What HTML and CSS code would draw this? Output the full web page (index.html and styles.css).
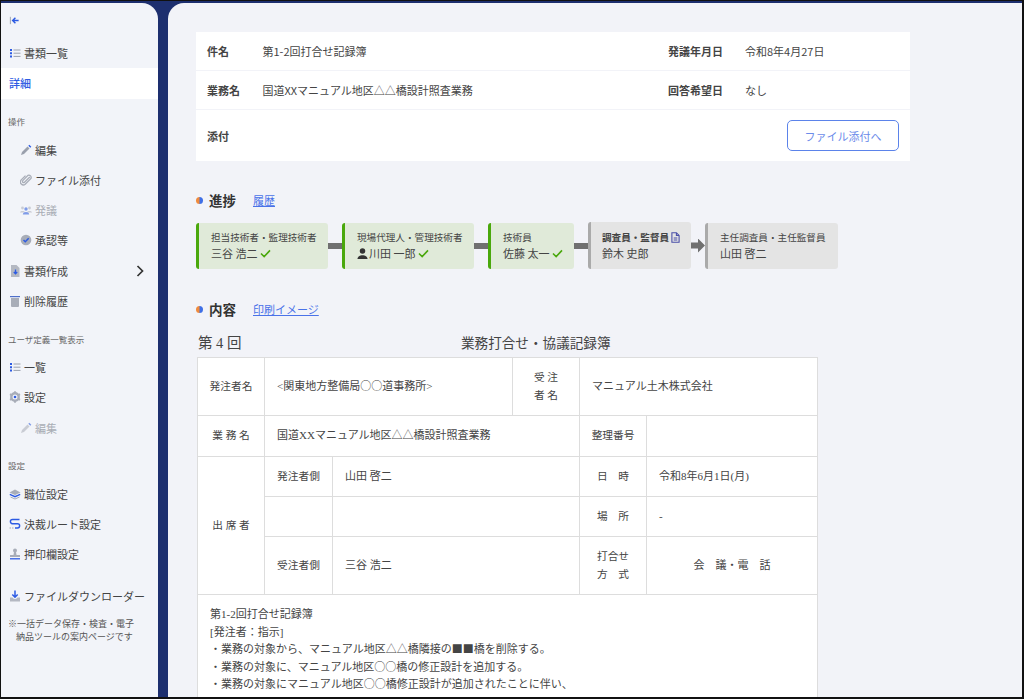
FILE: index.html
```html
<!DOCTYPE html>
<html lang="ja">
  <head>
    <meta charset="UTF-8" />
    <title>書類詳細</title>
    <link rel="stylesheet" href="styles.css">
  </head>
  <body>
    <div class="app">
      <aside class="sidebar">
        <div class="back-row">
          <svg class="icon" viewBox="0 0 12 12"><path d="M1.500 2v8" stroke="#9aa0ad" fill="none"/><path d="M10.500 6H4.500M7 3 4 6l3 3" stroke="#2d5be3" stroke-width="1.600" fill="none"/></svg>
        </div>

        <a class="nav-row">
          <svg class="icon" viewBox="0 0 12 12"><path d="M1 2h2v2H1zM1 5.200h2v2H1zM1 8.400h2v2H1z" fill="#2d5be3"/><path d="M4.500 3h7M4.500 6.200h7M4.500 9.400h7" stroke="#9aa0ad" fill="none"/></svg>
          書類一覧
        </a>
        <a class="nav-row active">詳細</a>

        <div class="nav-label">操作</div>
        <a class="nav-row sub">
          <svg class="icon" viewBox="0 0 12 12"><path d="M1 11l1-3 5.500-5.500 2 2L4 10z" fill="#9aa0ad"/><path d="M8.300 1.800 9.300.8l2 2-1 1z" fill="#2d5be3"/></svg>
          編集
        </a>
        <a class="nav-row sub">
          <svg class="icon" viewBox="0 0 12 12"><path d="M9.800 3 4.500 8.300a1.200 1.200 0 0 1-1.700-1.700L8 1.400a2.300 2.300 0 0 1 3 3L5.200 10.300a3 3 0 0 1-4.200-4.200L5.500 1.600" stroke="#a8adb8" stroke-width="1.300" fill="none"/></svg>
          ファイル添付
        </a>
        <a class="nav-row sub disabled">
          <svg class="icon" viewBox="0 0 12 12"><circle cx="2.500" cy="4" r="1.400" fill="#c9ccd4"/><circle cx="9.500" cy="4" r="1.400" fill="#c9ccd4"/><path d="M0 8.500c0-2 5-2 5 0zM7 8.500c0-2 5-2 5 0z" fill="#c9ccd4"/><circle cx="6" cy="5" r="1.700" fill="#7f9be8"/><path d="M2.800 10.500c0-3.300 6.400-3.300 6.400 0z" fill="#7f9be8"/></svg>
          発議
        </a>
        <a class="nav-row sub">
          <svg class="icon" viewBox="0 0 12 12"><circle cx="6" cy="6" r="5.300" fill="#a8adb8"/><path d="M3.500 6 5.300 7.800 8.700 4.300" stroke="#2d5be3" stroke-width="1.500" fill="none"/></svg>
          承認等
        </a>
        <a class="nav-row">
          <svg class="icon" viewBox="0 0 12 12"><path d="M2 0h5.500L10.500 3v9H2z" fill="#b4b8c2"/><path d="M6.500 4.500v4M4.800 7l1.700 1.800L8.200 7" stroke="#2d5be3" stroke-width="1.300" fill="none"/></svg>
          書類作成
          <svg class="chevron" viewBox="0 0 8 12"><path d="M1.500 1 6.500 6l-5 5" stroke="#333" stroke-width="1.700" fill="none"/></svg>
        </a>
        <a class="nav-row">
          <svg class="icon" viewBox="0 0 12 12"><path d="M1 1h10v1.200H1z" fill="#4f6fc9"/><path d="M2 3h8v8a1 1 0 0 1-1 1H3a1 1 0 0 1-1-1z" fill="#a8adb8"/></svg>
          削除履歴
        </a>

        <div class="nav-label">ユーザ定義一覧表示</div>
        <a class="nav-row">
          <svg class="icon" viewBox="0 0 12 12"><path d="M1 2h2v2H1zM1 5.200h2v2H1zM1 8.400h2v2H1z" fill="#2d5be3"/><path d="M4.500 3h7M4.500 6.200h7M4.500 9.400h7" stroke="#9aa0ad" fill="none"/></svg>
          一覧
        </a>
        <a class="nav-row">
          <svg class="icon" viewBox="0 0 12 12"><circle cx="6" cy="6" r="3.700" fill="none" stroke="#a8adb8" stroke-width="2.400"/><path d="M6 .3v2M6 9.700v2M1 3.100l1.700 1M9.300 7.900l1.700 1M1 8.900l1.700-1M9.300 4.100l1.700-1" stroke="#a8adb8" stroke-width="1.800"/><circle cx="6" cy="6" r="1.300" fill="#2d5be3"/></svg>
          設定
        </a>
        <a class="nav-row sub disabled">
          <svg class="icon" viewBox="0 0 12 12"><path d="M1 11l1-3 5.500-5.500 2 2L4 10z" fill="#c9ccd4"/><path d="M8.300 1.800 9.300.8l2 2-1 1z" fill="#7f9be8"/></svg>
          編集
        </a>

        <div class="nav-label">設定</div>
        <a class="nav-row">
          <svg class="icon" viewBox="0 0 12 12"><path d="M6 1.500 11.500 4.500 6 7 .5 4.500z" fill="#a8adb8"/><path d="M.8 6.300 6 8.700l5.200-2.400" stroke="#2d5be3" stroke-width="1.300" fill="none"/><path d="M1.500 9 6 11l4.500-2" stroke="#a8adb8" fill="none"/></svg>
          職位設定
        </a>
        <a class="nav-row">
          <svg class="icon" viewBox="0 0 12 12"><path d="M10.500 1.500H3.500a2 2 0 0 0 0 4.200h5a2 2 0 0 1 0 4.300H6" stroke="#2d5be3" stroke-width="1.400" fill="none"/><path d="M.5 10h1.500M3 10h1.500" stroke="#a8adb8" stroke-width="1.200"/></svg>
          決裁ルート設定
        </a>
        <a class="nav-row">
          <svg class="icon" viewBox="0 0 12 12"><circle cx="6" cy="2.500" r="2" fill="#a8adb8"/><path d="M5 4h2l.5 3H11v2H1V7h3.500z" fill="#a8adb8"/><path d="M1 10.800h10" stroke="#2d5be3" stroke-width="1.300"/></svg>
          押印欄設定
        </a>
        <a class="nav-row download">
          <svg class="icon" viewBox="0 0 12 12"><path d="M6 .5v6.500M3.300 4.500 6 7.200l2.700-2.700" stroke="#2d5be3" stroke-width="1.500" fill="none"/><path d="M1 7.500h2.500L5 9h2l1.500-1.500H11V11.500H1z" fill="#b4b8c2"/></svg>
          ファイルダウンローダー
        </a>
        <p class="nav-note">※一括データ保存・検査・電子<span class="nav-note-rest">納品ツールの案内ページです</span></p>
      </aside>

      <main class="main">
        <section class="info-card">
          <div class="info-row">
            <span class="info-label">件名</span>
            <span>第1-2回打合せ記録簿</span>
            <span class="info-label">発議年月日</span>
            <span>令和8年4月27日</span>
          </div>
          <div class="info-row">
            <span class="info-label">業務名</span>
            <span>国道XXマニュアル地区△△橋設計照査業務</span>
            <span class="info-label">回答希望日</span>
            <span>なし</span>
          </div>
          <div class="info-row attach-row">
            <span class="info-label">添付</span>
            <button class="attach-btn">ファイル添付へ</button>
          </div>
        </section>

        <div class="section-head progress-head">
          <span class="dot"></span>
          <h2>進捗</h2>
          <a class="head-link">履歴</a>
        </div>

        <div class="flow">
          <div class="step done step-first">
            <div class="step-role">担当技術者・監理技術者</div>
            <div class="step-name">三谷 浩二<svg class="check" viewBox="0 0 12 10"><path d="M1 5l3.500 3.500L11 1.500" stroke="#4aa80c" stroke-width="1.800" fill="none"/></svg></div>
          </div>
          <div class="link"></div>
          <div class="step done step-second">
            <div class="step-role">現場代理人・管理技術者</div>
            <div class="step-name"><svg class="person" viewBox="0 0 12 12"><circle cx="6" cy="3.200" r="3" fill="#333"/><path d="M.5 12c0-5.500 11-5.500 11 0z" fill="#333"/></svg>川田 一郎<svg class="check" viewBox="0 0 12 10"><path d="M1 5l3.500 3.500L11 1.500" stroke="#4aa80c" stroke-width="1.800" fill="none"/></svg></div>
          </div>
          <div class="link"></div>
          <div class="step done step-third">
            <div class="step-role">技術員</div>
            <div class="step-name">佐藤 太一<svg class="check" viewBox="0 0 12 10"><path d="M1 5l3.500 3.500L11 1.500" stroke="#4aa80c" stroke-width="1.800" fill="none"/></svg></div>
          </div>
          <div class="link"></div>
          <div class="step current">
            <div class="step-role"><b>調査員・監督員</b><svg class="doc" viewBox="0 0 10 12"><path d="M1 .7h5L9 3.700v7.600H1zM6 .7v3h3M3 6.500h4M3 8.700h4" stroke="#4a4fa8" stroke-width="1.200" fill="none"/></svg></div>
            <div class="step-name">鈴木 史郎</div>
          </div>
          <div class="link arrow"></div>
          <div class="step waiting">
            <div class="step-role">主任調査員・主任監督員</div>
            <div class="step-name">山田 啓二</div>
          </div>
        </div>

        <div class="section-head">
          <span class="dot"></span>
          <h2>内容</h2>
          <a class="head-link">印刷イメージ</a>
        </div>

        <div class="doc-head">
          <span class="doc-no">第 4 回</span>
          <span class="doc-title">業務打合せ・協議記録簿</span>
        </div>

        <table class="record">
          <colgroup>
            <col class="c-a" /><col class="c-b" /><col class="c-c" /><col class="c-d" /><col class="c-e" /><col class="c-f" />
          </colgroup>
          <tr class="tall">
            <th>発注者名</th>
            <td colspan="2">&lt;関東地方整備局<span class="sym">○○</span>道事務所&gt;</td>
            <th>受 注<br />者 名</th>
            <td colspan="2">マニュアル土木株式会社</td>
          </tr>
          <tr class="mid">
            <th>業 務 名</th>
            <td colspan="3">国道XXマニュアル地区<span class="sym">△△</span>橋設計照査業務</td>
            <th>整理番号</th>
            <td></td>
          </tr>
          <tr class="std">
            <th rowspan="3">出 席 者</th>
            <th>発注者側</th>
            <td colspan="2">山田 啓二</td>
            <th>日　時</th>
            <td>令和8年6月1日(月)</td>
          </tr>
          <tr class="std">
            <th></th>
            <td colspan="2"></td>
            <th>場　所</th>
            <td>-</td>
          </tr>
          <tr class="tall">
            <th>受注者側</th>
            <td colspan="2">三谷 浩二</td>
            <th>打合せ<br />方　式</th>
            <td class="method">会　議・電　話</td>
          </tr>
          <tr>
            <td class="minutes" colspan="6">
              第1-2回打合せ記録簿<br />
              [発注者：指示]<br />
              ・業務の対象から、マニュアル地区<span class="sym">△△</span>橋隣接の<span class="sym">■■</span>橋を削除する。<br />
              ・業務の対象に、マニュアル地区<span class="sym">○○</span>橋の修正設計を追加する。<br />
              ・業務の対象にマニュアル地区<span class="sym">○○</span>橋修正設計が追加されたことに伴い、
            </td>
          </tr>
        </table>
      </main>
    </div>
  </body>
</html>
```

FILE: styles.css
```css
* {
  box-sizing: border-box;
}

body {
  margin: 0;
  height: 699px;
  overflow: hidden;
  font-family: "Noto Sans CJK JP", "Noto Sans", sans-serif;
  font-size: 11px;
  color: #444;
  background-color: #1d2f6f;
}

.app {
  display: flex;
  height: 699px;
  padding-top: 2px;
  justify-content: space-between;
  border-style: solid;
  border-color: #111;
  border-width: 1px 2px 2px 1px;
}

/* sidebar */
.sidebar {
  width: 157px;
  flex-shrink: 0;
  background-color: #f2f4f9;
  border-top-right-radius: 16px;
}

.back-row {
  height: 35px;
  padding-left: 8px;
  display: flex;
  align-items: center;
}

.back-row .icon {
  width: 11px;
  height: 11px;
}

.nav-row {
  height: 30.25px;
  padding-left: 8px;
  display: flex;
  align-items: center;
  gap: 3px;
  color: #444;
}

.nav-row.sub {
  padding-left: 19px;
}

.nav-row.active {
  background-color: #fff;
  color: #2d5be3;
  font-weight: 500;
}

.nav-row.disabled {
  color: #a9adb5;
}

.nav-row.download {
  margin-top: 11px;
}

.icon {
  width: 12px;
  height: 12px;
  flex-shrink: 0;
}

.chevron {
  width: 8px;
  height: 12px;
  margin-left: auto;
  margin-right: 14px;
}

.nav-label {
  padding: 15.5px 0 5.5px 7px;
  font-size: 8.5px;
  line-height: 15px;
  color: #666;
}

.nav-note {
  margin: 6px 0 0 7px;
  font-size: 9px;
  line-height: 13px;
  color: #555;
}

.nav-note-rest {
  display: block;
  padding-left: 8px;
}

/* main area */
.main {
  width: 854px;
  flex-shrink: 0;
  padding: 29px 0 0 28px;
  overflow: hidden;
  background-color: #f2f3f8;
  border-top-left-radius: 16px;
}

.info-card {
  width: 714px;
  background-color: #fff;
}

.info-row {
  height: 39px;
  padding: 0 11px;
  display: grid;
  grid-template-columns: 55.5px 405.5px 77px 1fr;
  align-items: center;
  border-bottom: 1px solid #f2f3f8;
}

.info-label {
  font-weight: 700;
  color: #444;
}

.attach-row {
  height: 51px;
  display: flex;
  justify-content: space-between;
  border-bottom: none;
}

.attach-btn {
  width: 112px;
  height: 31px;
  padding: 0;
  font-family: inherit;
  font-size: 11px;
  color: #6b8bea;
  background-color: #fff;
  border: 1px solid #5b83ea;
  border-radius: 5px;
}

.section-head {
  height: 20px;
  margin-top: 30px;
  display: flex;
  align-items: center;
}

.progress-head {
  margin-top: 29px;
}

.dot {
  width: 7px;
  height: 7px;
  border-radius: 50%;
  background: linear-gradient(90deg, #f08a3c 40%, #3f6fe6 60%);
}

.section-head h2 {
  margin: 0 0 0 6px;
  font-size: 13.5px;
  font-weight: 700;
  color: #333;
}

.head-link {
  margin-left: 17px;
  color: #4a72e8;
  text-decoration: underline;
}

/* approval flow */
.flow {
  margin-top: 12px;
  display: flex;
  align-items: center;
}

.step {
  height: 46px;
  padding: 7px 0 0 12px;
  border-left: 3px solid #4aa80c;
  border-radius: 3px;
  background-color: #e0ead9;
}

.step-first,
.step-second {
  width: 132px;
}

.step-third {
  width: 86px;
}

.step.current {
  width: 103px;
  height: 47px;
  padding: 8px 0 0 11px;
  border-left-color: #aaa;
  background-color: #e4e4e4;
}

.step.waiting {
  width: 133px;
  border-left-color: #aaa;
  background-color: #e4e4e4;
}

.step-role {
  font-size: 9.6px;
  line-height: 15px;
  white-space: nowrap;
  display: flex;
  align-items: center;
  gap: 2px;
}

.step-role b {
  font-weight: 700;
}

.step-name {
  font-size: 11px;
  line-height: 17px;
  display: flex;
  align-items: center;
  gap: 1px;
}

.check {
  width: 11px;
  height: 9px;
  margin-left: 2px;
}

.person {
  width: 11px;
  height: 11px;
}

.doc {
  width: 9px;
  height: 11px;
}

.link {
  width: 14px;
  height: 6px;
  background-color: #707070;
}

.link.arrow {
  height: 14px;
  clip-path: polygon(0 28%, 50% 28%, 50% 0, 100% 50%, 50% 100%, 50% 72%, 0 72%);
}

/* printed record */
.doc-head {
  margin-top: 15px;
  padding-left: 2px;
  display: flex;
  font-family: "Liberation Serif", "Noto Sans CJK JP", serif;
  line-height: 19px;
  height: 23px;
  color: #444;
}

.doc-no {
  width: 263px;
  font-size: 14.5px;
}

.doc-title {
  font-size: 13.6px;
}

.record {
  width: 621px;
  margin-left: 1px;
  table-layout: fixed;
  border-collapse: collapse;
  background-color: #fff;
  font-family: "Liberation Serif", "Noto Sans CJK JP", serif;
  font-size: 10.7px;
  line-height: 17.5px;
  color: #444;
}

.sym {
  font-family: "Noto Sans CJK JP", sans-serif;
  line-height: 1;
}

.c-a, .c-d, .c-e {
  width: 67px;
}

.c-b {
  width: 68px;
}

.c-c {
  width: 180px;
}

.record th,
.record td {
  border: 1px solid #ddd;
  padding: 0 12px;
  font-weight: 400;
}

.record td {
  font-size: 11px;
}

.record th {
  padding: 0;
  text-align: center;
}

.record tr.tall {
  height: 58px;
}

.record tr.mid {
  height: 41px;
}

.record tr.std {
  height: 40px;
}

.record td.method {
  text-align: center;
}

.record td.minutes {
  padding: 11px 12px;
}
```
